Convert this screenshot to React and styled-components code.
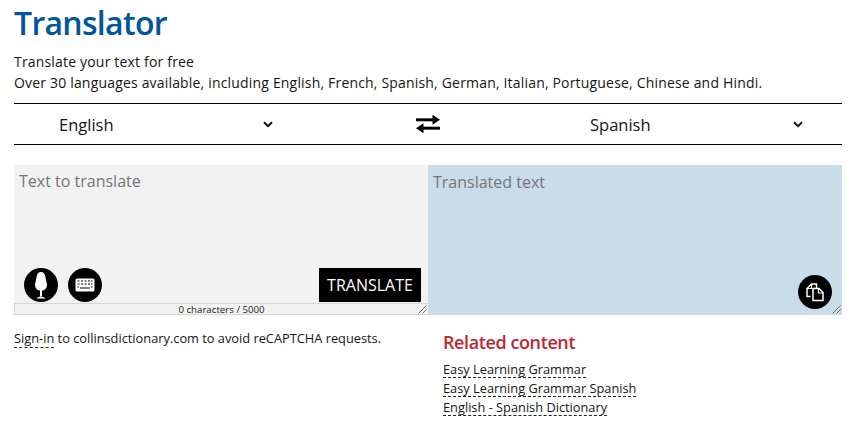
import { createGlobalStyle } from "styled-components";
import styled from "styled-components";

const GlobalStyle = createGlobalStyle`
  html, body {
    margin: 0;
    padding: 0;
    background: #fff;
  }
  body {
    font-family: "Open Sans", "Liberation Sans", sans-serif;
    color: #151515;
  }
`;

const Page = styled.div`
  width: 852px;
  height: 436px;
  overflow: hidden;
  padding: 0 10px 0 14px;
  box-sizing: border-box;
`;

const Title = styled.h1`
  margin: 0;
  padding-top: 2px;
  font-size: 32px;
  line-height: 42px;
  font-weight: 600;
  letter-spacing: -0.7px;
  color: #00569d;
`;

const Intro = styled.p`
  margin: 7px 0 0;
  font-size: 14px;
  line-height: 21px;
  letter-spacing: 0.18px;
`;

const LangBar = styled.div`
  display: grid;
  grid-template-columns: 1fr 1fr;
  position: relative;
  height: 40px;
  margin-top: 10px;
  border-top: 1px solid #000;
  border-bottom: 1px solid #000;
`;

const LangSelect = styled.div`
  display: flex;
  align-items: center;
  justify-content: space-between;
  padding: 0 ${(p) => p.$right}px 0 ${(p) => p.$left}px;
  font-size: 16.5px;
`;

const SwapButton = styled.div`
  position: absolute;
  left: 401px;
  top: 10px;
  width: 26px;
  height: 20px;
  color: #000;
`;

const Panels = styled.div`
  display: grid;
  grid-template-columns: 414px 414px;
  height: 150px;
  margin-top: 20px;
`;

const Panel = styled.div`
  position: relative;
  background: ${(p) => p.$bg};
  padding: ${(p) => p.$top}px 0 0 ${(p) => p.$left}px;
  font-size: 16px;
  line-height: 22px;
  color: #757575;
`;

const RoundButton = styled.div`
  position: absolute;
  left: ${(p) => p.$left}px;
  right: ${(p) => p.$right}px;
  bottom: ${(p) => p.$bottom}px;
  width: 34px;
  height: 34px;
  border-radius: 50%;
  background: #000;
  display: flex;
  align-items: center;
  justify-content: center;
`;

const TranslateButton = styled.div`
  position: absolute;
  right: 7px;
  bottom: 13px;
  width: 102px;
  height: 34px;
  background: #000;
  color: #fff;
  font-size: 16px;
  line-height: 34px;
  text-align: center;
`;

const Counter = styled.div`
  position: absolute;
  left: 0;
  right: 0;
  bottom: 0;
  height: 12px;
  box-sizing: border-box;
  border: 1px solid #d5d5d5;
  border-right: 0;
  font-size: 9.7px;
  line-height: 11px;
  text-align: center;
  color: #222;
`;

const Grip = styled.svg`
  position: absolute;
  right: 1px;
  bottom: 1px;
  width: 9px;
  height: 9px;
`;

const Lower = styled.div`
  display: grid;
  grid-template-columns: 429px 1fr;
  margin-top: 15px;
`;

const Note = styled.p`
  margin: -1px 0 0;
  font-size: 12.8px;
  line-height: 18px;
`;

const DashedLink = styled.a`
  color: inherit;
  text-decoration: none;
  border-bottom: 1px dashed #222;
`;

const Related = styled.div`
  display: flex;
  flex-direction: column;
  align-items: flex-start;
`;

const RelatedTitle = styled.h2`
  margin: 0 0 7px;
  font-size: 18px;
  line-height: 24px;
  font-weight: 600;
  color: #c1272d;
  letter-spacing: -0.4px;
`;

const RelatedLink = styled(DashedLink)`
  font-size: 12.8px;
  line-height: 16px;
  margin-bottom: 2px;
`;

const Chevron = () => (
  <svg width="10" height="7" viewBox="0 0 10 7" fill="none">
    <path d="M1 1.2 5 5.2 9 1.2" stroke="#111" strokeWidth="2" />
  </svg>
);

const GripLines = () => (
  <Grip viewBox="0 0 9 9" fill="none">
    <path d="M0.5 8.5 8.5 0.5M4.5 8.5 8.5 4.5" stroke="#555" strokeWidth="0.8" />
  </Grip>
);

export default function App() {
  return (
    <Page>
      <GlobalStyle />
      <Title>Translator</Title>
      <Intro>
        Translate your text for free
        <br />
        Over 30 languages available, including English, French, Spanish, German, Italian, Portuguese, Chinese and Hindi.
      </Intro>
      <LangBar>
        <LangSelect $left={45} $right={155}>
          English
          <Chevron />
        </LangSelect>
        <LangSelect $left={162} $right={39}>
          Spanish
          <Chevron />
        </LangSelect>
        <SwapButton>
          <svg width="26" height="20" viewBox="0 0 26 20" fill="none">
            <path d="M1 5.8H20" stroke="#000" strokeWidth="3" />
            <path d="M17.5 0.8 25 5.8 17.5 10.8Z" fill="#000" />
            <path d="M25 14.2H6" stroke="#000" strokeWidth="3" />
            <path d="M8.5 9.2 1 14.2 8.5 19.2Z" fill="#000" />
          </svg>
        </SwapButton>
      </LangBar>
      <Panels>
        <Panel $bg="#f2f2f2" $top={5} $left={5}>
          Text to translate
          <RoundButton $left={10} $bottom={13}>
            <svg width="20" height="30" viewBox="0 0 20 30" fill="none">
              <path d="M10 2C12.8 2 14 4 14.4 7L16 14.5C16 18.5 13.5 20.5 10 20.5S4 18.5 4 14.5L5.6 7C6 4 7.2 2 10 2Z" fill="#fff" />
              <path d="M9 20h2v6.5H9z" fill="#fff" />
              <path d="M5.5 28.5c1-2.4 8-2.4 9 0z" fill="#fff" />
            </svg>
          </RoundButton>
          <RoundButton $left={54} $bottom={13}>
            <svg width="20" height="14" viewBox="0 0 20 14">
              <rect x="0.5" y="0.5" width="19" height="13" rx="1.5" fill="#fff" />
              <path
                d="M2.5 3h2M6 3h2M9.5 3h2M13 3h2M16 3h1.5M2.5 6h2M6 6h2M9.5 6h2M13 6h2M16 6h1.5M2.5 9h1.5M5 10h10M16 9h1.5"
                stroke="#000"
                strokeWidth="1.2"
              />
            </svg>
          </RoundButton>
          <TranslateButton>TRANSLATE</TranslateButton>
          <Counter>0 characters / 5000</Counter>
          <GripLines />
        </Panel>
        <Panel $bg="#c9dcea" $top={6} $left={5}>
          Translated text
          <RoundButton $right={10} $bottom={6}>
            <svg width="20" height="20" viewBox="0 0 20 20" fill="none">
              <path d="M5.5 14.5H2V6.5L6.5 2H11.5V6" stroke="#fff" strokeWidth="1.5" />
              <path d="M6.5 2V6.5H2" stroke="#fff" strokeWidth="1.2" />
              <path d="M8 6.5H14L18 10.5V18.5H8Z" fill="#000" stroke="#fff" strokeWidth="1.5" />
              <path d="M13.5 6.5V11H18" stroke="#fff" strokeWidth="1.2" />
            </svg>
          </RoundButton>
          <GripLines />
        </Panel>
      </Panels>
      <Lower>
        <Note>
          <DashedLink>Sign-in</DashedLink> to collinsdictionary.com to avoid reCAPTCHA requests.
        </Note>
        <Related>
          <RelatedTitle>Related content</RelatedTitle>
          <RelatedLink>Easy Learning Grammar</RelatedLink>
          <RelatedLink>Easy Learning Grammar Spanish</RelatedLink>
          <RelatedLink>English - Spanish Dictionary</RelatedLink>
        </Related>
      </Lower>
    </Page>
  );
}
